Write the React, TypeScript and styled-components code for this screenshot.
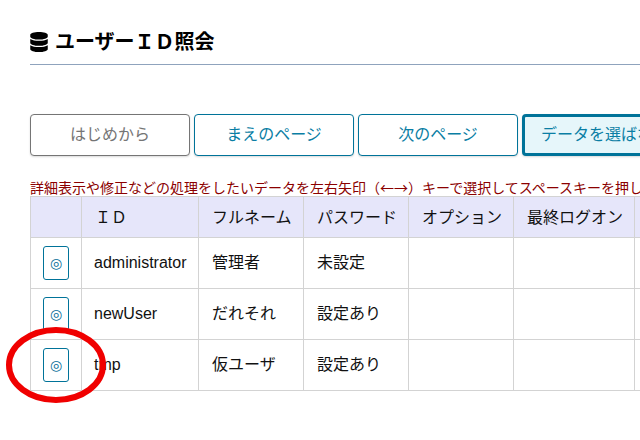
import styled, { createGlobalStyle } from "styled-components";
import { FaDatabase } from "react-icons/fa";

const GlobalStyle = createGlobalStyle`
    html, body {
        margin: 0;
        height: 100%;
        overflow: hidden;
        background: #fff;
    }
    body {
        font-family: "Liberation Sans", "Noto Sans CJK JP", sans-serif;
        color: #111;
    }
`;

const Page = styled.div`
    position: relative;
    width: 1000px;
    padding: 28px 0 0 30px;
    box-sizing: border-box;
`;

const Title = styled.h1`
    display: flex;
    align-items: flex-start;
    gap: 7px;
    width: 610px;
    height: 36px;
    margin: 0 0 49px;
    border-bottom: 1px solid #8fa3bd;
    font-size: 20px;
    font-weight: 700;
    line-height: 28px;
    color: #000;
    & > svg {
        margin-top: 4px;
        width: 18px;
        height: 20px;
    }
`;

const Toolbar = styled.div`
    display: flex;
    gap: 4px;
    align-items: center;
    height: 42px;
`;

const PageButton = styled.button<{ $tone?: "gray" | "blue" | "active" }>`
    width: 160px;
    height: 42px;
    padding: 0 0 4px;
    border-radius: 4px;
    box-sizing: border-box;
    font-family: "Noto Sans CJK JP", sans-serif;
    font-size: 16px;
    box-shadow: 0 1px 2px rgba(0, 0, 0, 0.15);
    border: ${(p) =>
        p.$tone === "gray"
            ? "1px solid #757575"
            : p.$tone === "active"
              ? "3px solid #007399"
              : "1px solid #007399"};
    color: ${(p) => (p.$tone === "gray" ? "#757575" : "#0a7ea4")};
    background: ${(p) => (p.$tone === "active" ? "#e6f6fa" : "#fff")};
    white-space: nowrap;
    text-align: ${(p) => (p.$tone === "active" ? "left" : "center")};
    padding-left: ${(p) => (p.$tone === "active" ? "16px" : "0")};
    flex: none;
`;

const ActiveButton = styled(PageButton)`
    width: 200px;
`;

const Notice = styled.p`
    margin: 22px 0 0;
    height: 18px;
    line-height: 18px;
    font-family: "Noto Sans CJK JP", sans-serif;
    font-size: 14px;
    color: #8b0000;
    white-space: nowrap;
`;

const Table = styled.table`
    border-collapse: collapse;
    table-layout: fixed;
    width: 709px;
    font-size: 16px;
`;

const HeadCell = styled.th`
    height: 41px;
    padding: 0 12px 3px 13px;
    background: #e6e6fa;
    border: 1px solid #d3d3d3;
    font-weight: 400;
    text-align: left;
    white-space: nowrap;
    box-sizing: border-box;
`;

const Cell = styled.td`
    height: 51px;
    padding: 0 12px 1px;
    border: 1px solid #d3d3d3;
    white-space: nowrap;
    box-sizing: border-box;
`;

const CjkText = styled.span`
    display: inline-block;
    margin: -4px 0 0 1px;
    vertical-align: top;
`;

const DetailCell = styled(Cell)`
    text-align: center;
    padding: 0;
`;

const DetailButton = styled.button`
    display: inline-flex;
    align-items: center;
    justify-content: center;
    width: 26px;
    height: 34px;
    padding: 0;
    vertical-align: middle;
    background: #fff;
    border: 1px solid #007399;
    border-radius: 3px;
    font-family: "DejaVu Sans", sans-serif;
    font-size: 14px;
    color: #0a6f99;
`;

const Marker = styled.svg`
    position: absolute;
    left: 0;
    top: 320px;
    width: 110px;
    height: 90px;
    pointer-events: none;
`;

const columns = [
    { label: "", width: 51 },
    { label: "ＩＤ", width: 117 },
    { label: "フルネーム", width: 105 },
    { label: "パスワード", width: 105 },
    { label: "オプション", width: 105 },
    { label: "最終ログオン", width: 121 },
    { label: "", width: 105 },
];

const users = [
    { id: "administrator", name: "管理者", password: "未設定" },
    { id: "newUser", name: "だれそれ", password: "設定あり" },
    { id: "tmp", name: "仮ユーザ", password: "設定あり" },
];

const App = () => {
    return (
        <Page>
            <GlobalStyle />
            <Title>
                <FaDatabase />
                <span>ユーザーＩＤ照会</span>
            </Title>
            <Toolbar>
                <PageButton $tone="gray">はじめから</PageButton>
                <PageButton $tone="blue">まえのページ</PageButton>
                <PageButton $tone="blue">次のページ</PageButton>
                <ActiveButton $tone="active">データを選ばないで戻る</ActiveButton>
            </Toolbar>
            <Notice>
                詳細表示や修正などの処理をしたいデータを左右矢印（←→）キーで選択してスペースキーを押してください
            </Notice>
            <Table>
                <colgroup>
                    {columns.map((c, i) => (
                        <col key={i} width={c.width} />
                    ))}
                </colgroup>
                <thead>
                    <tr>
                        {columns.map((c, i) => (
                            <HeadCell key={i}>{c.label}</HeadCell>
                        ))}
                    </tr>
                </thead>
                <tbody>
                    {users.map((u) => (
                        <tr key={u.id}>
                            <DetailCell>
                                <DetailButton>◎</DetailButton>
                            </DetailCell>
                            <Cell>{u.id}</Cell>
                            <Cell>
                                <CjkText>{u.name}</CjkText>
                            </Cell>
                            <Cell>
                                <CjkText>{u.password}</CjkText>
                            </Cell>
                            <Cell />
                            <Cell />
                            <Cell />
                        </tr>
                    ))}
                </tbody>
            </Table>
            <Marker viewBox="0 0 110 90">
                <ellipse cx="56" cy="45" rx="47" ry="35" fill="none" stroke="#f00000" strokeWidth="6" />
            </Marker>
        </Page>
    );
};

export default App;
